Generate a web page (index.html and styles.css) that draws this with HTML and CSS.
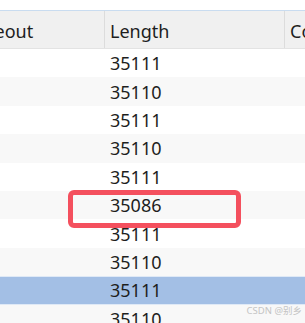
FILE: index.html
```html
<!DOCTYPE html>
<html lang="en">
<head>
    <meta charset="UTF-8">
    <meta name="viewport" content="width=device-width, initial-scale=1.0">
    <title>Packet list</title>
    <link rel="stylesheet" href="styles.css">
</head>
<body>
    <div class="view">
        <div class="table">
            <div class="head">
                <div class="cell col-time">Timeout</div>
                <div class="cell col-len">Length</div>
                <div class="cell col-content">Content</div>
            </div>
            <div class="row"><div class="cell col-time"></div><div class="cell col-len">35111</div><div class="cell col-content"></div></div>
            <div class="row alt"><div class="cell col-time"></div><div class="cell col-len">35110</div><div class="cell col-content"></div></div>
            <div class="row"><div class="cell col-time"></div><div class="cell col-len">35111</div><div class="cell col-content"></div></div>
            <div class="row alt"><div class="cell col-time"></div><div class="cell col-len">35110</div><div class="cell col-content"></div></div>
            <div class="row"><div class="cell col-time"></div><div class="cell col-len">35111</div><div class="cell col-content"></div></div>
            <div class="row alt"><div class="cell col-time"></div><div class="cell col-len">35086</div><div class="cell col-content"></div></div>
            <div class="row"><div class="cell col-time"></div><div class="cell col-len">35111</div><div class="cell col-content"></div></div>
            <div class="row alt"><div class="cell col-time"></div><div class="cell col-len">35110</div><div class="cell col-content"></div></div>
            <div class="row selected"><div class="cell col-time"></div><div class="cell col-len">35111</div><div class="cell col-content"></div></div>
            <div class="row alt"><div class="cell col-time"></div><div class="cell col-len">35110</div><div class="cell col-content"></div></div>
        </div>
        <div class="mark"></div>
        <div class="watermark">CSDN @别乡</div>
    </div>
</body>
</html>
```

FILE: styles.css
```css
body {
    margin: 0;
    padding: 0;
    background-color: #ffffff;
    font-family: 'Noto Sans', 'Noto Sans CJK SC', sans-serif;
    color: #1e1e1e;
    overflow: hidden;
}

.view {
    position: relative;
    width: 305px;
    height: 323px;
    overflow: hidden;
    padding-top: 10px;
    box-sizing: border-box;
}

.table {
    margin-left: -42px;
    width: 480px;
}

.head {
    display: flex;
    height: 39px;
    background-color: #f0f0f0;
    border-top: 1px solid #c9dcf0;
    border-bottom: 1px solid #e3e3e3;
    box-sizing: border-box;
}

.head .cell {
    border-right: 1px solid #dcdcdc;
    padding-top: 3px;
}

.cell {
    display: flex;
    align-items: center;
    font-size: 18px;
    padding-left: 5px;
    box-sizing: border-box;
    white-space: nowrap;
    overflow: hidden;
}

.col-time {
    width: 147px;
}

.col-len {
    width: 180px;
}

.col-content {
    flex: 1;
}

.row {
    display: flex;
    height: 28.4px;
    background-color: #ffffff;
}

.row.alt {
    background-color: #f8f8f8;
}

.row.selected {
    background-color: #a3bfe5;
    border-top: 1px solid #dfe9f6;
    border-bottom: 1px solid #dfe9f6;
    box-sizing: border-box;
}

.mark {
    position: absolute;
    left: 68px;
    top: 190px;
    width: 173px;
    height: 38px;
    border: 5px solid #f4505e;
    border-radius: 6px;
    box-sizing: border-box;
}

.watermark {
    position: absolute;
    right: 3px;
    top: 304px;
    font-size: 9.5px;
    line-height: 14px;
    color: #c4c4c4;
}
```
